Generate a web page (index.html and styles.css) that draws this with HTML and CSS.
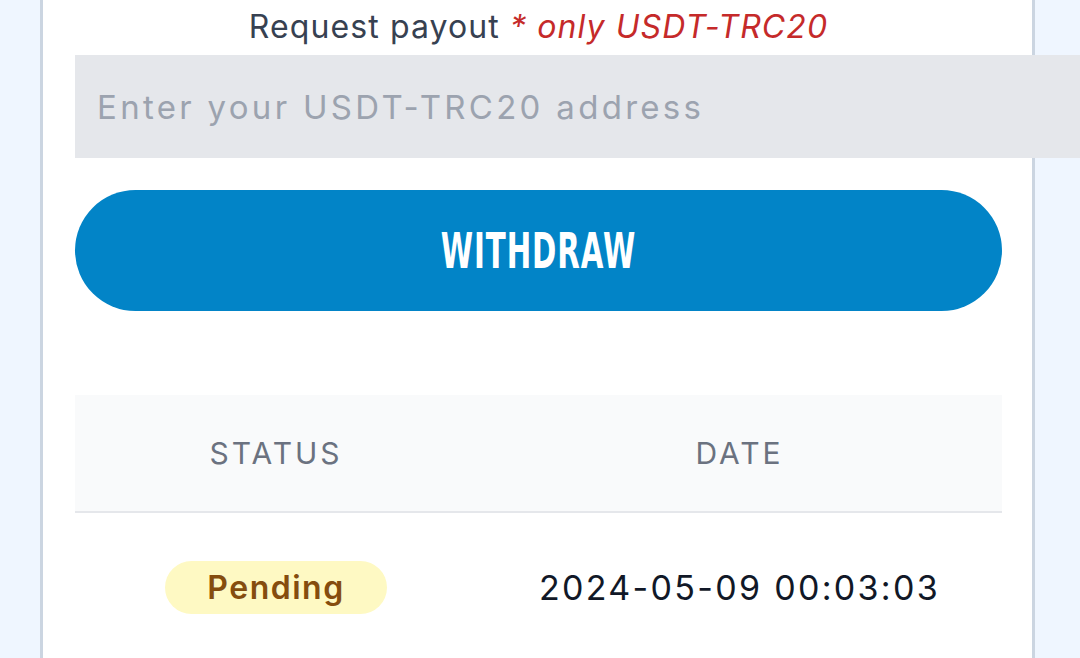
FILE: index.html
```html
<!DOCTYPE html>
<html>
<head>
<meta charset="utf-8">
<link rel="stylesheet" href="styles.css">
</head>
<body>
<div class="page">
  <div class="card">
    <div class="label">Request payout <span class="note">* only USDT-TRC20</span></div>
    <input class="address" type="text" placeholder="Enter your USDT-TRC20 address">
    <button class="withdraw"><span>WITHDRAW</span></button>
    <table class="history">
      <thead>
        <tr><th class="col-status">STATUS</th><th class="col-date">DATE</th></tr>
      </thead>
      <tbody>
        <tr>
          <td class="col-status"><span class="pill">Pending</span></td>
          <td class="col-date date">2024-05-09 00:03:03</td>
        </tr>
      </tbody>
    </table>
  </div>
</div>
</body>
</html>
```

FILE: styles.css
```css
html, body {
  margin: 0;
  padding: 0;
}
body {
  background: #eff6ff;
  font-family: Inter, "Noto Sans", sans-serif;
  overflow: hidden;
  width: 1080px;
  height: 658px;
}
.page {
  padding-left: 40px;
}
.card {
  width: 995px;
  min-height: 658px;
  background: #ffffff;
  border-left: 3px solid #cbd5e1;
  border-right: 3px solid #cbd5e1;
  padding: 7px 30px 0 32px;
  box-sizing: border-box;
  display: flex;
  flex-direction: column;
  align-items: flex-start;
}
.label {
  align-self: stretch;
  text-align: center;
  font-size: 32px;
  line-height: 40px;
  letter-spacing: 1.1px;
  color: #374151;
}
.note {
  color: #c52a2a;
  font-style: italic;
}
.address {
  margin-top: 8px;
  width: 1010px;
  height: 103px;
  border: none;
  background: #e5e7eb;
  padding: 0 0 0 22px;
  box-sizing: border-box;
  font-family: inherit;
  font-size: 33px;
  letter-spacing: 3.3px;
  color: #111827;
  outline: none;
  position: relative;
  z-index: 1;
}
.address::placeholder {
  color: #9ca3af;
}
.withdraw {
  margin-top: 32px;
  width: 927px;
  height: 121px;
  border: none;
  border-radius: 61px;
  background: #0284c7;
  color: #ffffff;
  display: flex;
  align-items: center;
  justify-content: center;
  padding: 0;
}
.withdraw span {
  font-family: "Liberation Sans Narrow", "DejaVu Sans Condensed", sans-serif;
  font-weight: 700;
  font-size: 50px;
  letter-spacing: 1.5px;
  display: inline-block;
  transform: scaleX(0.65);
}
.history {
  margin-top: 84px;
  width: 927px;
  border-collapse: collapse;
}
.history thead tr {
  background: #f9fafb;
  border-bottom: 2px solid #e5e7eb;
}
.history th {
  height: 116px;
  font-weight: 400;
  font-size: 30px;
  letter-spacing: 3px;
  color: #6b7280;
  text-align: center;
  padding: 0;
}
.col-status {
  width: 402px;
}
.history td {
  height: 148px;
  text-align: center;
  padding: 0;
  vertical-align: middle;
}
.pill {
  display: inline-block;
  background: #fef9c3;
  color: #854d0e;
  font-weight: 600;
  font-size: 32px;
  letter-spacing: 1.5px;
  line-height: 53px;
  padding: 0 42px;
  border-radius: 27px;
}
.date {
  font-size: 34px;
  letter-spacing: 2.3px;
  color: #111827;
}
```
